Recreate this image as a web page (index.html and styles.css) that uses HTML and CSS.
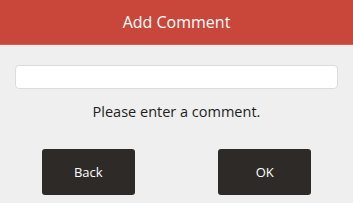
FILE: index.html
```html
<!DOCTYPE html>
<html lang="en">
<head>
    <meta charset="UTF-8">
    <meta name="viewport" content="width=device-width, initial-scale=1.0">
    <title>Add Comment</title>
    <link rel="stylesheet" href="styles.css">
</head>
<body>
    <header class="title-bar">Add Comment</header>
    <main class="content">
        <input class="comment-input" type="text">
        <p class="prompt">Please enter a comment.</p>
        <div class="actions">
            <button class="btn">Back</button>
            <button class="btn">OK</button>
        </div>
    </main>
</body>
</html>
```

FILE: styles.css
```css
body {
    margin: 0;
    background-color: #efefef;
    font-family: "Open Sans", sans-serif;
    color: #1e1e1e;
}

.title-bar {
    height: 44px;
    line-height: 44px;
    background-color: #c8473a;
    border-bottom: 1px solid #d9624f;
    color: #fff;
    text-align: center;
    font-size: 16px;
}

.content {
    padding: 20px 15px 0;
}

.comment-input {
    display: block;
    box-sizing: border-box;
    width: 100%;
    height: 24px;
    background: #fff;
    border: 1px solid #dcdcdc;
    border-radius: 4px;
}

.prompt {
    margin: 13px 0 0;
    height: 20px;
    line-height: 20px;
    text-align: center;
    font-size: 14.5px;
}

.actions {
    display: grid;
    grid-template-columns: 1fr 1fr;
    margin: 27px -15px 0;
    justify-items: center;
}

.btn {
    width: 93px;
    height: 46px;
    background-color: #2e2a27;
    color: #fff;
    border: none;
    border-radius: 3px;
    font-family: "Open Sans", sans-serif;
    font-size: 13px;
}
```
